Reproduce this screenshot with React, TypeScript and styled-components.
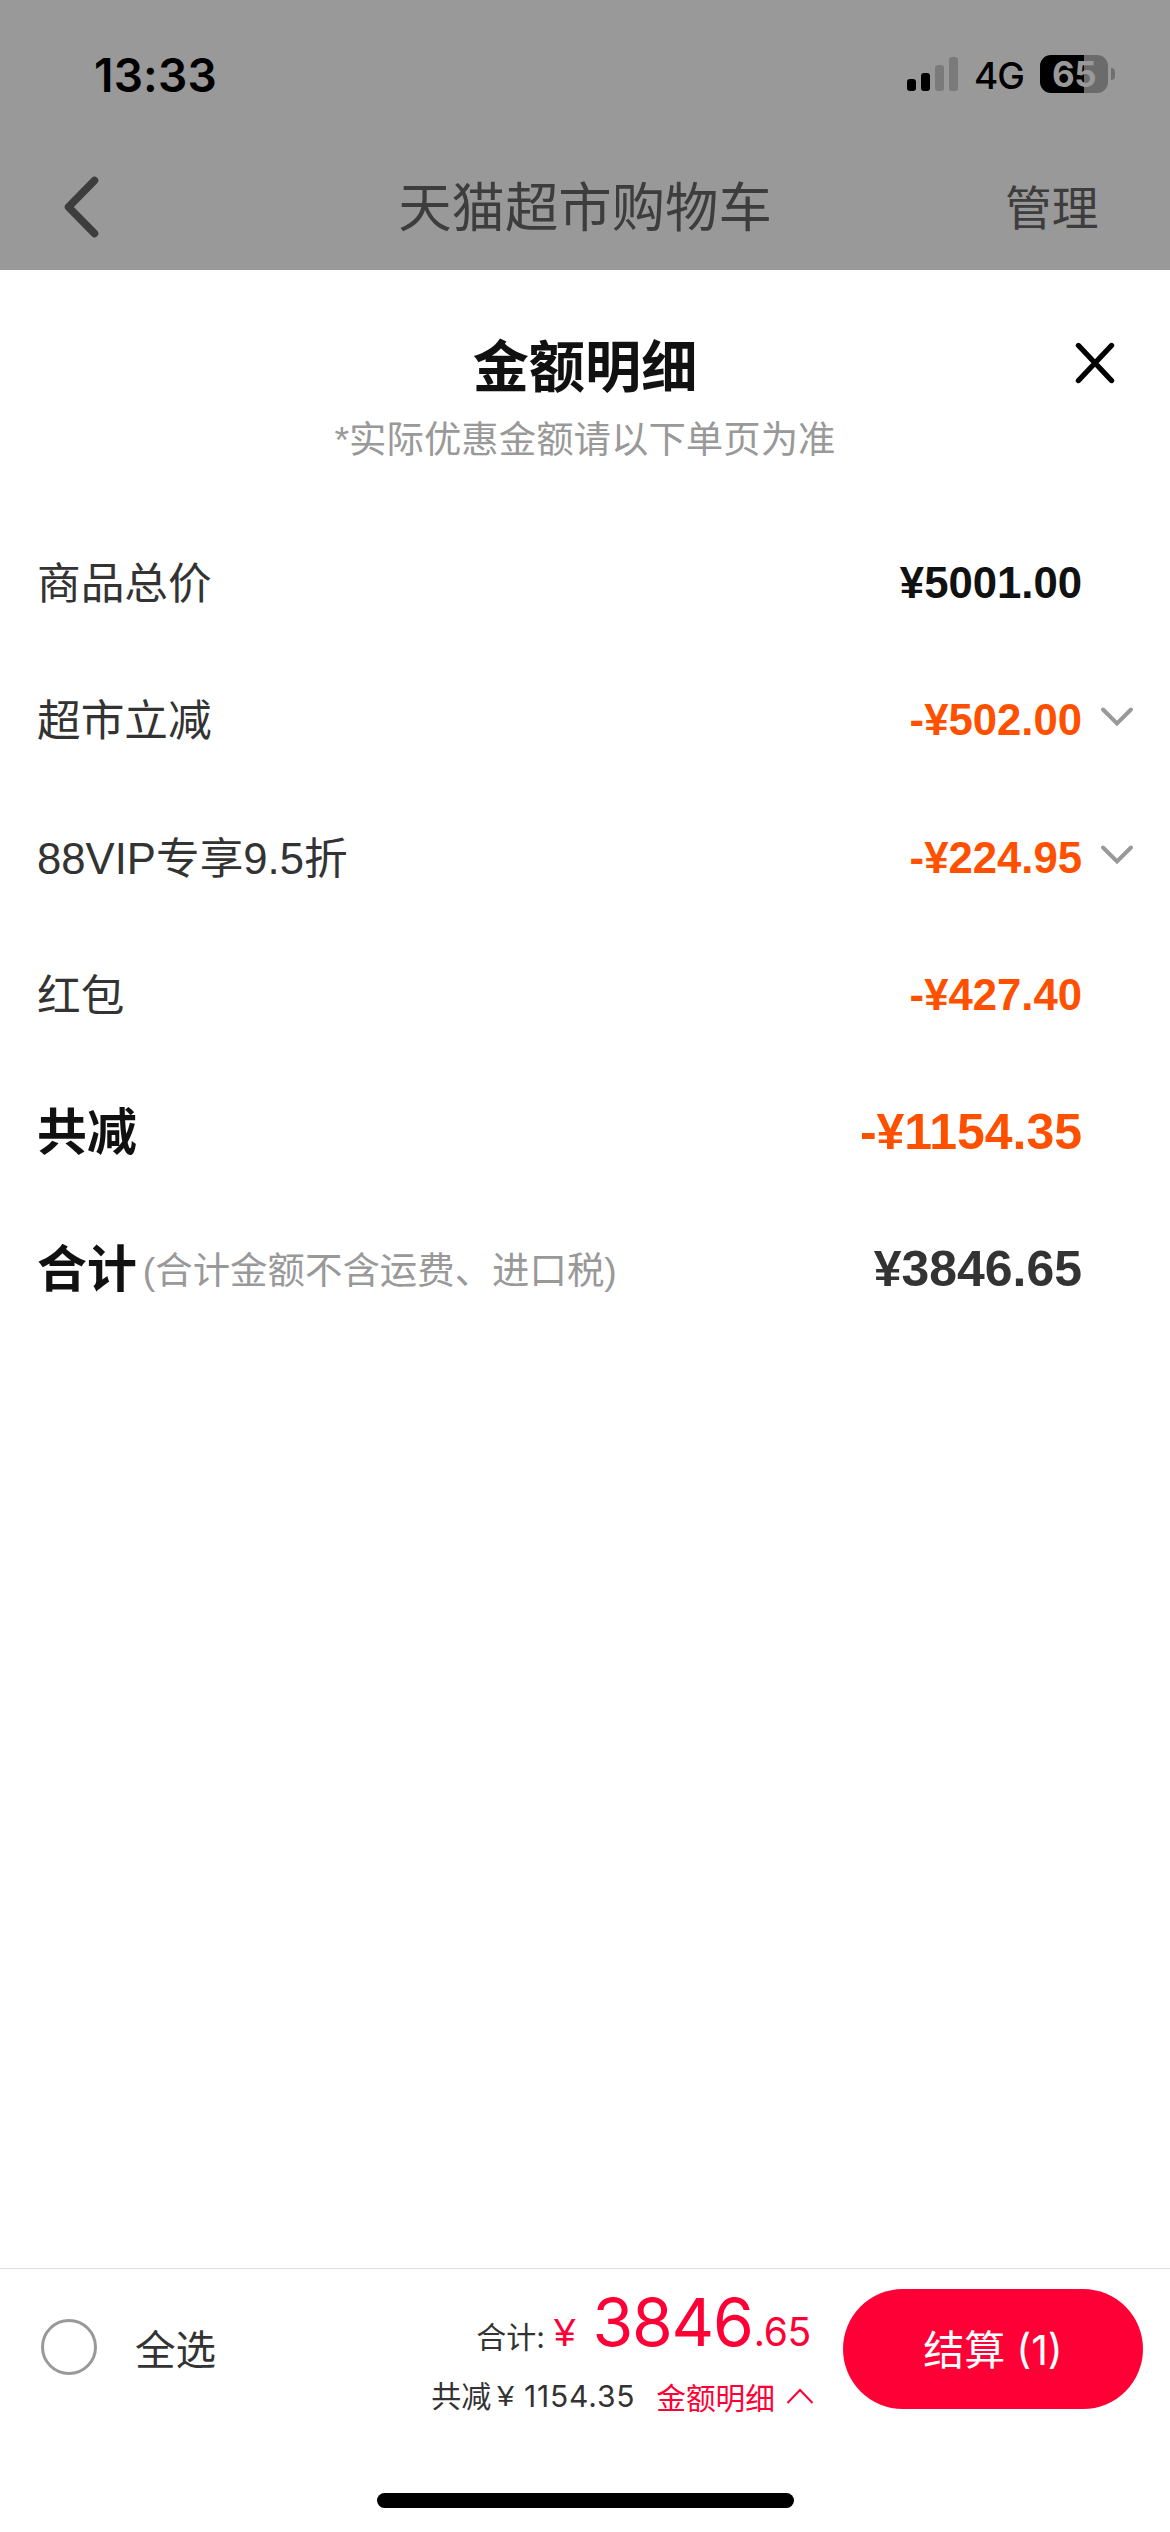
import React from "react";
import styled, { createGlobalStyle } from "styled-components";

const sans = `"Liberation Sans", "Noto Sans CJK SC", sans-serif`;
const system = `Inter, "Noto Sans CJK SC", sans-serif`;

const GlobalStyle = createGlobalStyle`
  * { box-sizing: border-box; }
  body { margin: 0; background: #fff; }
`;

const Screen = styled.div`
  display: flex;
  flex-direction: column;
  width: 1170px;
  height: 2532px;
  overflow: hidden;
  background: #fff;
  font-family: ${sans};
  color: #333;
  white-space: nowrap;
`;

const Backdrop = styled.header`
  height: 270px;
  background: #999;
`;

const StatusBar = styled.div`
  display: flex;
  align-items: center;
  justify-content: space-between;
  height: 148px;
  padding: 0 55px 0 94px;
  color: #000;
  font-family: ${system};
`;

const Clock = styled.span`
  font-size: 46px;
  line-height: 60px;
  font-weight: 600;
  padding-top: 1px;
  letter-spacing: 0.2px;
`;

const StatusIcons = styled.div`
  display: flex;
  align-items: center;
`;

const Signal = styled.div`
  display: flex;
  align-items: flex-end;
  gap: 5px;
  height: 34px;
`;

const SignalBar = styled.i<{ $height: number; $on?: boolean }>`
  width: 9px;
  height: ${(p) => p.$height}px;
  border-radius: 3px;
  background: ${(p) => (p.$on ? "#000" : "#7a7a7a")};
`;

const Network = styled.span`
  width: 50px;
  margin: 3px 16px 0 16px;
  font-size: 37px;
  font-weight: 500;
  line-height: 44px;
  letter-spacing: -1px;
`;

const Battery = styled.div`
  display: flex;
  align-items: center;
  justify-content: center;
  width: 68px;
  height: 38px;
  border-radius: 11px;
  background: linear-gradient(90deg, #000 44px, #6b6b6b 44px);
  color: #999;
  font-size: 35px;
  font-weight: 700;
  line-height: 38px;
  letter-spacing: -0.5px;
`;

const BatteryCap = styled.i`
  width: 4px;
  height: 12px;
  margin-left: 3px;
  border-radius: 0 4px 4px 0;
  background: #6f6f6f;
`;

const NavBar = styled.div`
  display: grid;
  grid-template-columns: 200px 1fr 200px;
  align-items: center;
  height: 122px;
  color: #3d3d3d;
`;

const BackIcon = styled.svg`
  width: 40px;
  height: 64px;
  margin: 0 0 4px 62px;
`;

const NavTitle = styled.div`
  text-align: center;
  font-size: 53.4px;
  line-height: 64px;
`;

const Manage = styled.div`
  padding-left: 35px;
  font-size: 46.8px;
  line-height: 64px;
`;

const Sheet = styled.main`
  flex: 1;
  display: flex;
  flex-direction: column;
`;

const SheetHead = styled.div`
  display: grid;
  grid-template-columns: 200px 1fr 200px;
  height: 244px;
  padding-top: 60px;
  justify-items: center;
`;

const SheetTitles = styled.div`
  grid-column: 2;
  text-align: center;
`;

const SheetTitle = styled.h1`
  margin: 0;
  font-size: 56.16px;
  line-height: 76px;
  font-weight: 700;
  color: #111;
`;

const SheetNote = styled.p`
  margin: 0;
  font-size: 37.44px;
  line-height: 69px;
  color: #999;
`;

const CloseIcon = styled.svg`
  width: 42px;
  height: 44px;
  margin: 11px 0 0 50px;
`;

const Row = styled.div`
  display: grid;
  grid-template-columns: 1fr auto 51px;
  align-items: center;
  height: 137.28px;
  padding: 0 37px;
`;

const RowLabel = styled.div<{ $strong?: boolean }>`
  padding-top: 3px;
  font-size: ${(p) => (p.$strong ? 49.92 : 43.68)}px;
  font-weight: ${(p) => (p.$strong ? 700 : 400)};
  color: ${(p) => (p.$strong ? "#111" : "#333")};
  line-height: 70px;
`;

const RowHint = styled.span`
  margin-left: 6px;
  font-size: 37.44px;
  font-weight: 400;
  color: #999;
  line-height: 1;
  vertical-align: 3px;
`;

const Amount = styled.div<{ $color: string; $strong?: boolean }>`
  padding-top: 1px;
  font-size: ${(p) => (p.$strong ? 49.92 : 43.68)}px;
  font-weight: 700;
  line-height: 70px;
  color: ${(p) => p.$color};
`;

const ExpandIcon = styled.svg`
  width: 36px;
  height: 22px;
  margin: 0 0 5px 17px;
`;

const Footer = styled.footer`
  display: flex;
  flex-direction: column;
  align-items: center;
  height: 264px;
  border-top: 1px solid #ddd;
  font-family: ${system};
`;

const CheckoutBar = styled.div`
  display: flex;
  align-items: center;
  width: 100%;
  height: 160px;
  padding: 0 27px 0 41px;
`;

const Radio = styled.span`
  width: 56px;
  height: 56px;
  margin-bottom: 4px;
  border: 3px solid #999;
  border-radius: 50%;
`;

const SelectAll = styled.span`
  padding-top: 3px;
  margin-left: 38px;
  font-family: ${sans};
  font-size: 40.56px;
  line-height: 60px;
`;

const Totals = styled.div`
  flex: 1;
  display: flex;
  flex-direction: column;
  align-items: flex-end;
  height: 130px;
  margin-right: 29px;
`;

const TotalLine = styled.div`
  height: 76px;
  margin-right: 3px;
  line-height: 76px;
  font-size: 66px;
  letter-spacing: -1.2px;
  color: #ff0036;
`;

const TotalLabel = styled.span`
  margin-right: 9px;
  font-size: 30px;
  letter-spacing: 0;
  color: #333;
  vertical-align: -2px;
  line-height: 1;
`;

const Currency = styled.span`
  margin-right: 17px;
  font-family: ${sans};
  font-size: 38.5px;
  letter-spacing: 0;
  line-height: 1;
`;

const Cents = styled.span`
  margin-left: 1px;
  font-size: 39px;
  letter-spacing: -0.3px;
  line-height: 1;
`;

const SavingLine = styled.div`
  display: flex;
  align-items: center;
  height: 50px;
  margin-top: 11px;
  font-size: 30px;
  line-height: 50px;
`;

const Saving = styled.span`
  display: flex;
  margin-right: 21px;
`;

const SavingCurrency = styled.span`
  margin: 0 10px 0 6px;
  font-family: ${sans};
`;

const SavingValue = styled.span`
  letter-spacing: 0.8px;
`;

const DetailLink = styled.span`
  padding-top: 3px;
  font-size: 29.7px;
  color: #ff0036;
`;

const CollapseIcon = styled.svg`
  width: 28px;
  height: 18px;
  margin-left: 11px;
`;

const PayButton = styled.button`
  display: flex;
  align-items: center;
  justify-content: center;
  gap: 11px;
  width: 300px;
  height: 120px;
  padding: 2px 0 0;
  border: 0;
  border-radius: 60px;
  background: #ff0036;
  color: #fff;
  font-family: ${system};
  font-size: 41px;
  line-height: 60px;
`;

const HomeIndicator = styled.div`
  width: 417px;
  height: 15px;
  margin-top: 64px;
  border-radius: 8px;
  background: #000;
`;

type Item = {
  label: string;
  hint?: string;
  amount: string;
  color: string;
  strong?: boolean;
  expandable?: boolean;
};

const items: Item[] = [
  { label: "商品总价", amount: "¥5001.00", color: "#111" },
  { label: "超市立减", amount: "-¥502.00", color: "#ff5000", expandable: true },
  { label: "88VIP专享9.5折", amount: "-¥224.95", color: "#ff5000", expandable: true },
  { label: "红包", amount: "-¥427.40", color: "#ff5000" },
  { label: "共减", amount: "-¥1154.35", color: "#ff5000", strong: true },
  {
    label: "合计",
    hint: "(合计金额不含运费、进口税)",
    amount: "¥3846.65",
    color: "#333",
    strong: true,
  },
];

export default function App() {
  return (
    <Screen>
      <GlobalStyle />
      <Backdrop>
        <StatusBar>
          <Clock>13:33</Clock>
          <StatusIcons>
            <Signal>
              <SignalBar $height={12} $on />
              <SignalBar $height={18} $on />
              <SignalBar $height={26} />
              <SignalBar $height={34} />
            </Signal>
            <Network>4G</Network>
            <Battery>65</Battery>
            <BatteryCap />
          </StatusIcons>
        </StatusBar>
        <NavBar>
          <BackIcon viewBox="0 0 40 64" fill="none" stroke="#3d3d3d" strokeWidth="7.5" strokeLinecap="round" strokeLinejoin="round">
            <path d="M32.5 5.5L6.5 32L32.5 58.5" />
          </BackIcon>
          <NavTitle>天猫超市购物车</NavTitle>
          <Manage>管理</Manage>
        </NavBar>
      </Backdrop>
      <Sheet>
        <SheetHead>
          <SheetTitles>
            <SheetTitle>金额明细</SheetTitle>
            <SheetNote>*实际优惠金额请以下单页为准</SheetNote>
          </SheetTitles>
          <CloseIcon viewBox="0 0 42 44" fill="none" stroke="#000" strokeWidth="5.4" strokeLinecap="round">
            <path d="M4.5 4.5L37.5 39.5M37.5 4.5L4.5 39.5" />
          </CloseIcon>
        </SheetHead>
        {items.map((item) => (
          <Row key={item.label}>
            <RowLabel $strong={item.strong}>
              {item.label}
              {item.hint && <RowHint>{item.hint}</RowHint>}
            </RowLabel>
            <Amount $color={item.color} $strong={item.strong}>
              {item.amount}
            </Amount>
            {item.expandable && (
              <ExpandIcon viewBox="0 0 36 22" fill="none" stroke="#999" strokeWidth="4" strokeLinecap="round">
                <path d="M4 3.500L18 17.500L32 3.500" />
              </ExpandIcon>
            )}
          </Row>
        ))}
      </Sheet>
      <Footer>
        <CheckoutBar>
          <Radio />
          <SelectAll>全选</SelectAll>
          <Totals>
            <TotalLine>
              <TotalLabel>合计:</TotalLabel>
              <Currency>¥</Currency>
              3846<Cents>.65</Cents>
            </TotalLine>
            <SavingLine>
              <Saving>
                共减<SavingCurrency>¥</SavingCurrency>
                <SavingValue>1154.35</SavingValue>
              </Saving>
              <DetailLink>金额明细</DetailLink>
              <CollapseIcon viewBox="0 0 28 18" fill="none" stroke="#ff0036" strokeWidth="2">
                <path d="M1.500 16L14 3L26.500 16" />
              </CollapseIcon>
            </SavingLine>
          </Totals>
          <PayButton>
            <span>结算</span>
            <span>(1)</span>
          </PayButton>
        </CheckoutBar>
        <HomeIndicator />
      </Footer>
    </Screen>
  );
}
